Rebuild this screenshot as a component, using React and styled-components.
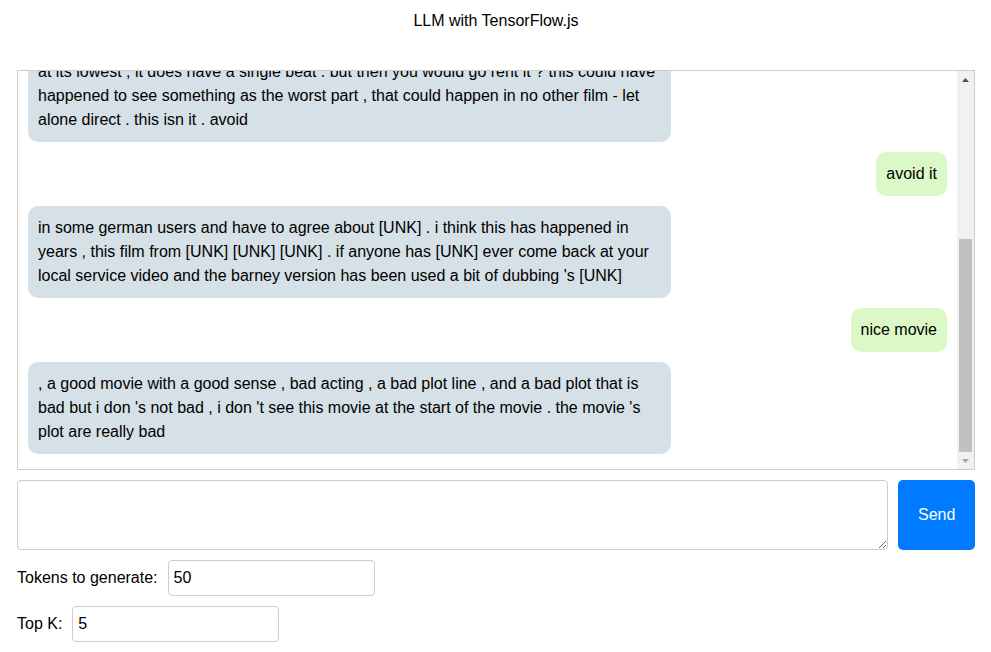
import React, { useLayoutEffect, useRef, useState } from "react";
import styled, { createGlobalStyle } from "styled-components";

const GlobalStyle = createGlobalStyle`
  html, body { margin: 0; padding: 0; background: #fff; }
  body { font-family: "Liberation Sans", Arial, sans-serif; font-size: 16px; color: #000; }
  * { box-sizing: border-box; }
`;

const Page = styled.div`
  padding: 0 16px 0 17px;
`;

const Title = styled.div`
  text-align: center;
  font-size: 16px;
  line-height: 18px;
  padding-top: 12px;
  height: 70px;
`;

const ChatFrame = styled.div`
  height: 400px;
  border: 1px solid #ccc;
  display: flex;
`;

const MessagePane = styled.div`
  flex: 1;
  min-width: 0;
  overflow: hidden;
  padding: 10px;
  display: flex;
  flex-direction: column;
`;

const ScrollTrack = styled.div`
  width: 17px;
  flex: none;
  background: #f1f1f1;
  display: flex;
  flex-direction: column;
`;

const ArrowButton = styled.div`
  height: 17px;
  flex: none;
  display: flex;
  align-items: center;
  justify-content: center;
  color: ${(p) => (p.$disabled ? "#a3a3a3" : "#505050")};
`;

const ThumbArea = styled.div`
  flex: 1;
  min-height: 0;
`;

const Thumb = styled.div`
  margin: 0 2px;
  background: #c1c1c1;
`;

const Bubble = styled.div`
  max-width: 70%;
  padding: 10px;
  margin: 5px 0;
  border-radius: 10px;
  line-height: 24px;
  white-space: pre-line;
  flex: none;
  align-self: ${(p) => (p.$user ? "flex-end" : "flex-start")};
  background: ${(p) => (p.$user ? "#dcf8c6" : "#d6e0e7")};
`;

const InputRow = styled.div`
  display: flex;
  gap: 10px;
  margin-top: 10px;
`;

const TextArea = styled.textarea`
  flex: 1;
  height: 70px;
  border: 1px solid #ccc;
  border-radius: 4px;
  padding: 8px;
  font-family: inherit;
  font-size: 16px;
  resize: both;
`;

const SendButton = styled.button`
  background: #007bff;
  color: #fff;
  border: none;
  border-radius: 5px;
  padding: 0 20px;
  font-family: inherit;
  font-size: 16px;
  height: 70px;
  width: 77px;
`;

const Setting = styled.div`
  display: flex;
  align-items: center;
  gap: 10px;
  margin-top: 10px;
`;

const Label = styled.label`
  font-size: 16px;
`;

const NumberInput = styled.input`
  width: 207px;
  height: 36px;
  border: 1px solid #ccc;
  border-radius: 4px;
  padding: 0 5px;
  font-family: inherit;
  font-size: 16px;
  color: #000;
`;

const messages = [
  { user: true, text: "this movie was" },
  {
    user: false,
    text:
      "the worst movie i have ever seen . the acting is bad , the plot is bad and the script is even worse . i don 't know why anyone would want to watch this film , it has no story , no characters and no ending . the director must have been asleep when he made it . the music is annoying and the camera work is terrible . i was really looking forward to this film , but it was a huge disappointment . the only good thing about it is that it is short . i would not recommend this to anyone , not even to my worst enemy . the special effects are cheap and the dialogue is silly . even for a [UNK] movie , this one is really bad . i gave it a 1 because there is no lower score , but\nat its lowest , it does have a single beat . but then you would go rent it ? this could have happened to see something as the worst part , that could happen in no other film - let alone direct . this isn it . avoid",
  },
  { user: true, text: "avoid it" },
  {
    user: false,
    text:
      "in some german users and have to agree about [UNK] . i think this has happened in years , this film from [UNK] [UNK] [UNK] . if anyone has [UNK] ever come back at your local service video and the barney version has been used a bit of dubbing 's [UNK]",
  },
  { user: true, text: "nice movie" },
  {
    user: false,
    text:
      ", a good movie with a good sense , bad acting , a bad plot line , and a bad plot that is bad but i don 's not bad , i don 't see this movie at the start of the movie . the movie 's plot are really bad",
  },
];

const UpArrow = () => (
  <svg width="7" height="4" viewBox="0 0 7 4">
    <polygon points="0,4 3.5,0 7,4" fill="currentColor" />
  </svg>
);

const DownArrow = () => (
  <svg width="7" height="4" viewBox="0 0 7 4">
    <polygon points="0,0 3.5,4 7,0" fill="currentColor" />
  </svg>
);

export default function App() {
  const paneRef = useRef(null);
  const areaRef = useRef(null);
  const [thumb, setThumb] = useState({ top: 0, height: 0 });

  useLayoutEffect(() => {
    const pane = paneRef.current;
    const area = areaRef.current;
    if (!pane || !area) return;
    pane.scrollTop = pane.scrollHeight;
    const trackH = area.clientHeight;
    const sh = pane.scrollHeight;
    const ch = pane.clientHeight;
    setThumb({
      top: (trackH * pane.scrollTop) / sh,
      height: (trackH * ch) / sh,
    });
  }, []);

  return (
    <Page>
      <GlobalStyle />
      <Title>LLM with TensorFlow.js</Title>
      <ChatFrame>
        <MessagePane ref={paneRef}>
          {messages.map((m, i) => (
            <Bubble key={i} $user={m.user}>
              {m.text}
            </Bubble>
          ))}
        </MessagePane>
        <ScrollTrack>
          <ArrowButton>
            <UpArrow />
          </ArrowButton>
          <ThumbArea ref={areaRef}>
            <Thumb style={{ marginTop: thumb.top, height: thumb.height }} />
          </ThumbArea>
          <ArrowButton $disabled>
            <DownArrow />
          </ArrowButton>
        </ScrollTrack>
      </ChatFrame>
      <InputRow>
        <TextArea />
        <SendButton>Send</SendButton>
      </InputRow>
      <Setting>
        <Label>Tokens to generate:</Label>
        <NumberInput type="number" defaultValue={50} />
      </Setting>
      <Setting>
        <Label>Top K:</Label>
        <NumberInput type="number" defaultValue={5} />
      </Setting>
    </Page>
  );
}
